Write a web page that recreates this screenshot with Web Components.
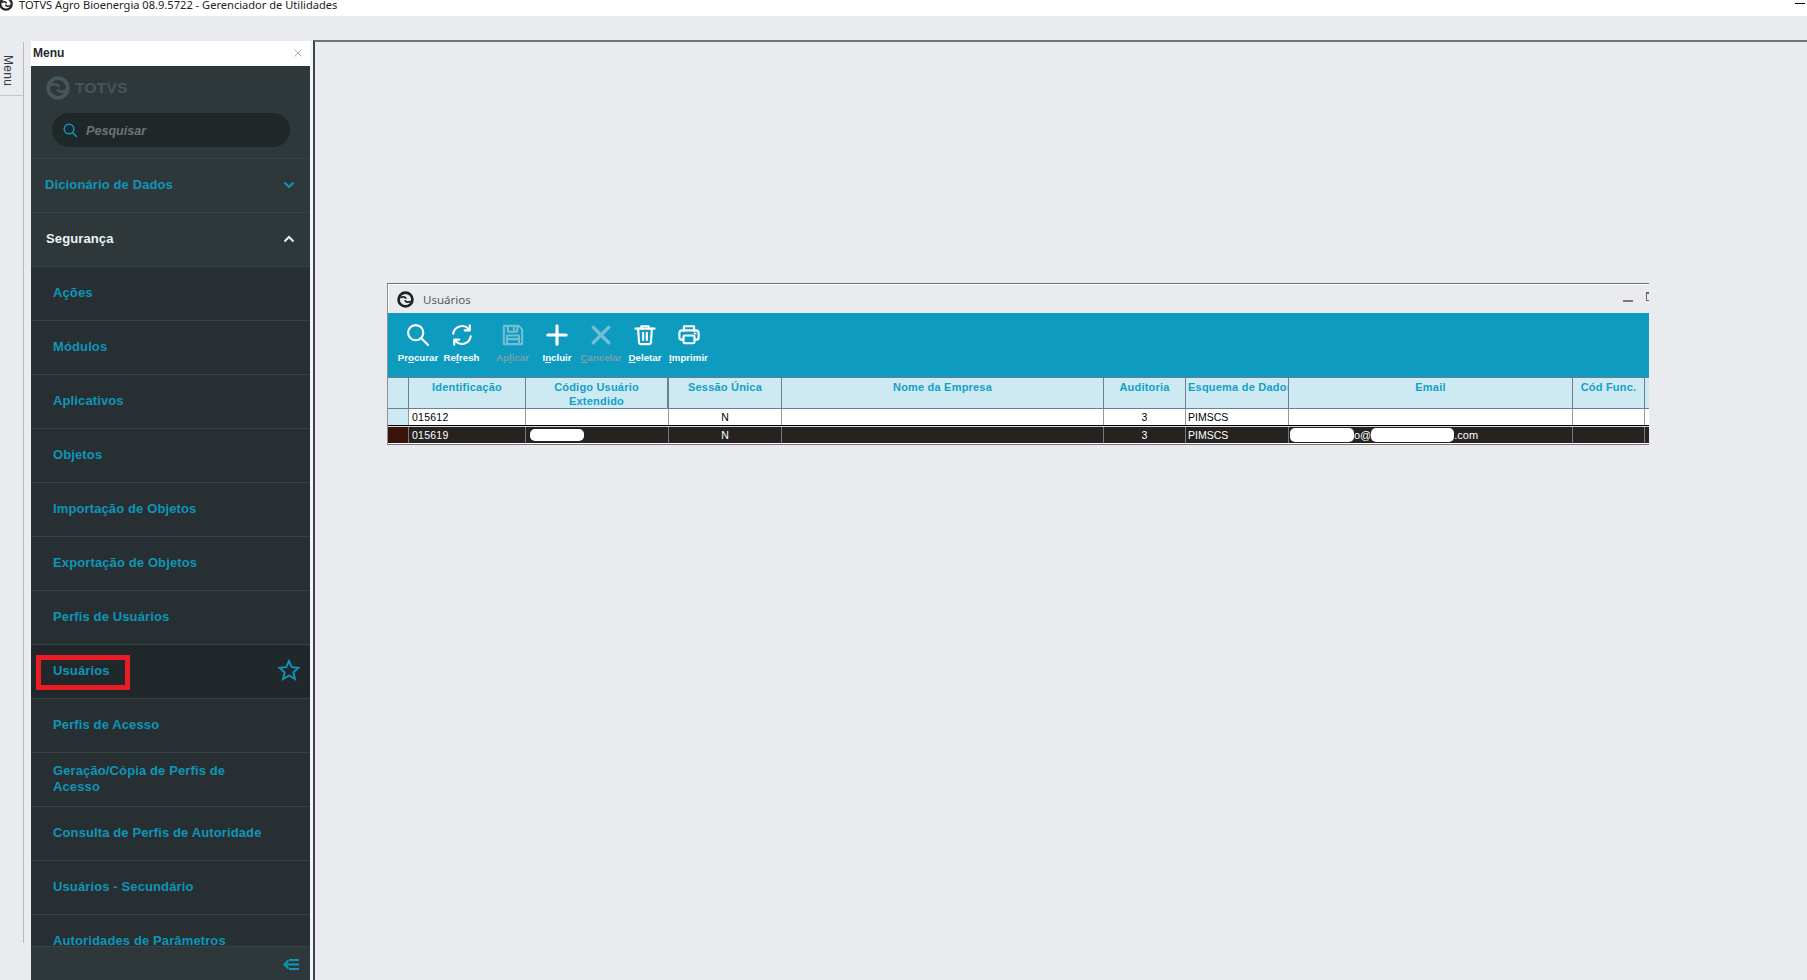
<!DOCTYPE html>
<html lang="pt"><head><meta charset="utf-8"><title>TOTVS</title>
<style>html,body{margin:0;height:100%;overflow:hidden;background:#e9ebef}</style></head>
<body>
<app-shell>
  <title-bar slot="top">TOTVS Agro Bioenergia 08.9.5722 - Gerenciador de Utilidades</title-bar>
  <side-rail slot="rail"></side-rail>
  <menu-panel slot="panel">
    <menu-item kind="group" chevron="down">Dicionário de Dados</menu-item>
    <menu-item kind="open" chevron="up">Segurança</menu-item>
    <menu-item>Ações</menu-item>
    <menu-item>Módulos</menu-item>
    <menu-item>Aplicativos</menu-item>
    <menu-item>Objetos</menu-item>
    <menu-item>Importação de Objetos</menu-item>
    <menu-item>Exportação de Objetos</menu-item>
    <menu-item>Perfis de Usuários</menu-item>
    <menu-item active>Usuários</menu-item>
    <menu-item>Perfis de Acesso</menu-item>
    <menu-item>Geração/Cópia de Perfis de Acesso</menu-item>
    <menu-item>Consulta de Perfis de Autoridade</menu-item>
    <menu-item>Usuários - Secundário</menu-item>
    <menu-item>Autoridades de Parâmetros</menu-item>
  </menu-panel>
  <desk-window slot="desk" caption="Usuários">
    <tool-button slot="tools" icon="search" style="width:40px;margin-left:10px"><span>Pr<u>o</u>curar</span></tool-button>
    <tool-button slot="tools" icon="refresh" style="width:35px;margin-left:6px"><span>Re<u>f</u>resh</span></tool-button>
    <tool-button slot="tools" icon="save" disabled style="width:31px;margin-left:18px"><span>Ap<u>l</u>icar</span></tool-button>
    <tool-button slot="tools" icon="plus" style="width:30px;margin-left:14px"><span>I<u>n</u>cluir</span></tool-button>
    <tool-button slot="tools" icon="close" disabled style="width:40px;margin-left:9px"><span><u>C</u>ancelar</span></tool-button>
    <tool-button slot="tools" icon="trash" style="width:32px;margin-left:8px"><span><u>D</u>eletar</span></tool-button>
    <tool-button slot="tools" icon="print" style="width:39px;margin-left:8px"><span><u>I</u>mprimir</span></tool-button>
    <data-grid></data-grid>
  </desk-window>
</app-shell>
<script>
const LOGO = (ring) => `<svg viewBox="0 0 24 24" width="100%" height="100%" aria-hidden="true"><circle cx="12" cy="12" r="9.800" fill="none" stroke="${ring}" stroke-width="3.800"/><path d="M4.500 9.500C8 7.500 11.500 8 13 10.800M19.500 14.500C16 16.500 12.500 16 11 13.200" fill="none" stroke="${ring}" stroke-width="2.600"/></svg>`;
const ICONS = {
  search:'<circle cx="9.500" cy="9.500" r="8.300"/><path d="M15.600 15.600l7.400 7.400"/>',
  refresh:'<path d="M2.500 10.500A9.700 9.700 0 0 1 19 5.200"/><path d="M20.500 1.500v5.500H15"/><path d="M21.500 13.500A9.700 9.700 0 0 1 5 18.800"/><path d="M3.500 22.500V17H9"/>',
  save:'<path d="M2 2h16l4 4v16H2z"/><path d="M6.500 2v6.500h10V2"/><path d="M13 4v2.500"/><path d="M5.500 22v-9.500h13V22"/><path d="M5.500 16.500h13"/>',
  plus:'<path d="M12 2v20M2 12h20" stroke-width="3.400"/>',
  close:'<path d="M3.500 3.500l17 17M20.500 3.500l-17 17" stroke-width="3.600"/>',
  trash:'<path d="M1.500 5h21"/><path d="M8 5V2.500h8V5"/><path d="M4.500 5l1 15a2.300 2.300 0 0 0 2.300 2h8.400a2.300 2.300 0 0 0 2.300-2l1-15"/><path d="M10 9.500v8M14 9.500v8"/>',
  print:'<path d="M6.500 7.500V2.500h11v5"/><path d="M6 17H3.500A2 2 0 0 1 1.500 15V10a3 3 0 0 1 3-3h15a3 3 0 0 1 3 3v5a2 2 0 0 1-2 2H18"/><rect x="6" y="12.500" width="12" height="8.500" rx="1.500"/><path d="M18.500 10.300h.5"/>'
};
function el(name, css, html){
  customElements.define(name, class extends HTMLElement{
    connectedCallback(){
      if(this.shadowRoot) return;
      const r=this.attachShadow({mode:'open'});
      r.innerHTML=`<style>${css}</style>`+(typeof html==='function'?html(this):html);
    }
  });
}
el('app-shell',`
  :host{display:flex;flex-direction:column;width:1807px;height:980px;overflow:hidden;font-family:"Liberation Sans",sans-serif;background:#e9ebef}
  .work{flex:1;display:flex;min-height:0}
  ::slotted([slot=desk]){flex:1;min-width:0}
`,`<slot name="top"></slot><div class="work"><slot name="rail"></slot><slot name="panel"></slot><slot name="desk"></slot></div>`);
el('title-bar',`
  :host{display:flex;height:16px;background:#fff;align-items:flex-start;position:relative;overflow:hidden;font:11.100px/10px "Noto Sans","Open Sans",sans-serif;color:#222}
  .ic{width:14px;height:14px;margin:-3px 6px 0 -1px;flex:none}
  .t{white-space:nowrap}
  .min{position:absolute;left:1795px;top:3px;width:10px;height:1px;background:#000}
`,()=>`<span class="ic">${LOGO('#1d2226')}</span><span class="t"><slot></slot></span><span class="min"></span>`);
el('side-rail',`
  :host{display:block;width:23px;height:901px;margin-top:26px;border-right:1px solid #b6b9be;flex:none}
  .m{box-sizing:border-box;height:54px;border-bottom:1px solid #c3c5c9;padding:13px 0 0 2px}
  .m span{display:block;writing-mode:vertical-rl;font:12px/12px "Liberation Sans",sans-serif;color:#2f3a4a;letter-spacing:.3px}
`,`<div class="m"><span>Menu</span></div>`);
el('menu-panel',`
  :host{display:flex;flex-direction:column;flex:none;width:279px;margin:25px 3px 0 7px;background:#272f32;color:#0e95b8;overflow:hidden;box-shadow:3px 0 0 #f3f5f7}
  .hd{height:25px;flex:none;background:#fff;display:flex;align-items:center;justify-content:space-between;padding:0 8px 2px 2px;box-sizing:border-box;font:bold 12px "Liberation Sans",sans-serif;color:#23282c}
  .hd svg{width:8px;height:8px}
  .top{height:93px;flex:none;box-sizing:border-box;background:#2e383a;border-bottom:1px solid #364244;padding:9px 0 0 15px}
  .logo{display:flex;align-items:center;height:26px;color:#46565a;font:bold 15.500px/26px "Liberation Sans",sans-serif;letter-spacing:.3px;gap:5px}
  .logo i{display:block;width:24px;height:24px}
  .search{box-sizing:border-box;width:238px;height:34px;margin:12px 0 0 6px;border-radius:17px;background:#1f2729;display:flex;align-items:center;padding:1px 0 0 11px;gap:8px;font:italic bold 12.600px "Liberation Sans",sans-serif;color:#6d7476}
  .search svg{width:15px;height:15px}
  .list{flex:1;min-height:0;overflow:hidden}
  .ft{height:34px;flex:none;background:#2e383a;border-top:1px solid #364244;box-sizing:border-box;display:flex;justify-content:flex-end;align-items:center;padding:2px 11px 0 0}
  .ft svg{width:16px;height:13px}
`,()=>`<div class="hd"><span>Menu</span><svg viewBox="0 0 8 8"><path d="M.5.5l7 7M7.500.5l-7 7" stroke="#aeb1b4" fill="none"/></svg></div>
<div class="top"><div class="logo"><i>${LOGO('#46565a')}</i><span>TOTVS</span></div>
<div class="search"><svg viewBox="0 0 15 15" fill="none" stroke="#0e95b8" stroke-width="1.500"><circle cx="6" cy="6" r="4.800"/><path d="M9.500 9.500L14 14"/></svg><span>Pesquisar</span></div></div>
<div class="list"><slot></slot></div>
<div class="ft"><svg viewBox="0 0 16 13" fill="none" stroke="#0e95b8" stroke-width="2"><path d="M6 2h10M1.500 6.500H16M6 11h10"/><path d="M5.500 2.500L1.500 6.500l4 4"/></svg></div>`);
el('menu-item',`
  :host{display:flex;align-items:center;position:relative;box-sizing:border-box;height:54px;border-bottom:1px solid #364244;padding:0 40px 2px 22px;font:bold 13px/16px "Liberation Sans",sans-serif;letter-spacing:.12px;color:#0e95b8;background:#272f32}
  :host([kind]){background:#2e383a;padding:0 10px 2px 14px}
  :host([kind=open]){color:#eef2f3;padding-left:15px}
  :host([active]){background:#21282b}
  .t{flex:1}
  svg.chev{width:12px;height:8px;margin-right:5px;flex:none}
  svg.star{position:absolute;left:247px;top:14px;width:22px;height:22px}
  .box{position:absolute;left:5px;top:10px;width:94px;height:35px;box-sizing:border-box;border:5px solid #ed1c24}
`,h=>{
  const k=h.getAttribute('chevron');
  const ch=k?`<svg class="chev" viewBox="0 0 12 8" fill="none" stroke="${k==='up'?'#eef2f3':'#0e95b8'}" stroke-width="2"><path d="${k==='up'?'M1.500 6.500L6 2l4.500 4.500':'M1.500 1.500L6 6l4.500-4.500'}"/></svg>`:'';
  const act=h.hasAttribute('active')?`<span class="box"></span><svg class="star" viewBox="0 0 22 22" fill="none" stroke="#0e95b8" stroke-width="1.900"><path d="M11 2l2.700 6.200 6.800.6-5.100 4.500 1.500 6.700L11 16.500 5.100 20l1.500-6.700L1.500 8.800l6.800-.6z"/></svg>`:'';
  return `<span class="t"><slot></slot></span>${ch}${act}`;
});
el('desk-window',`
  :host{display:block;position:relative;margin-top:24px;box-sizing:border-box;border-left:2px solid #3c4452;border-top:2px solid #6d7276;background:#e9ebef}
  .win{position:absolute;left:72px;top:241px;width:1262px;height:162px;box-sizing:border-box;border-top:1px solid #6b737b;border-left:1px solid #8b9096;overflow:hidden;display:flex;flex-direction:column}
  .cap{flex:none;height:29px;box-sizing:border-box;border-top:1px solid #fff;border-left:1px solid #fff;display:flex;align-items:center;padding-left:8px;gap:9px;position:relative;font:11.500px "Noto Sans","Open Sans",sans-serif;color:#545a62}
  .cap i{display:block;width:17px;height:17px}
  .min{position:absolute;left:1234px;top:15px;width:10px;height:2px;background:#777}
  .max{position:absolute;left:1257px;top:7px;width:8px;height:9px;box-sizing:border-box;border:1px solid #666;border-top-width:2px}
  .bar{flex:none;height:64px;background:#0d9bbf;display:flex;align-items:flex-start}
`,h=>`<div class="win"><div class="cap"><i>${LOGO('#1d2226')}</i><span>${h.getAttribute('caption')}</span><span class="min"></span><span class="max"></span></div><div class="bar"><slot name="tools"></slot></div><slot></slot></div>`);
el('tool-button',`
  :host{display:flex;flex-direction:column;align-items:center;flex:none;padding-top:11px;font:bold 9.700px/12px "Liberation Sans",sans-serif;color:#fff;white-space:nowrap}
  :host([disabled]){color:#7f9fab}
  svg{width:22px;height:22px;fill:none;stroke:#fff;stroke-width:2.300;stroke-linecap:round;stroke-linejoin:round;flex:none}
  :host([disabled]) svg{stroke:#72bed5}
  .l{margin-top:6px}
`,h=>`<svg viewBox="0 0 24 24">${ICONS[h.getAttribute('icon')]}</svg><div class="l"><slot></slot></div>`);
el('data-grid',`
  :host{display:block;font-family:"Liberation Sans",sans-serif;--c:21px 117px 143px 113px 322px 82px 103px 284px 72px 6px}
  .r{display:grid;grid-template-columns:var(--c);width:1263px}
  .r>div{box-sizing:border-box;border-right:1px solid var(--l);overflow:hidden;white-space:nowrap}
  .h{--l:#6b7f9a;height:32px;background:#cdeaf3;border-top:1px solid #6f7c86;border-bottom:1px solid #6b7f9a;box-sizing:border-box}
  .h>div{font:bold 11px/14px "Liberation Sans",sans-serif;color:#12a0c8;text-align:center;padding-top:2px;letter-spacing:.2px;white-space:normal}
  .h>.left{text-align:left;padding-left:2px;white-space:nowrap;letter-spacing:.22px}
  .h>.tk{border-right-width:2px}
  .d{font:10.500px/15px "Liberation Sans",sans-serif;text-align:center}
  .d>div{padding-top:1px}
  .d>.left{text-align:left;padding-left:2px}
  .d>.id{text-align:left;padding-left:3px;letter-spacing:.25px}
  .a{--l:#8e97a2;height:16px;background:#fff;color:#000}
  .a>.rh{background:#cdeaf3}
  .sep{height:2px;background:linear-gradient(#000 50%,#d8d8d8 50%)}
  .b{--l:#77797c;height:16px;background:#262220;color:#fff}
  .b>.rh{background:#3a140c}
  .end{height:2px;background:linear-gradient(#fff 50%,#777 50%)}
  .d>.em{display:flex;align-items:center;padding:0 0 0 1px;font-size:11px;line-height:14px}
  .blob{display:inline-block;background:#fff;border-radius:5px;height:14px;flex:none}
`,()=>`
<div class="r h"><div></div><div>Identificação</div><div class="tk">Código Usuário<br>Extendido</div><div>Sessão Única</div><div>Nome da Empresa</div><div>Auditoria</div><div class="left">Esquema de Dados</div><div>Email</div><div>Cód Func.</div><div></div></div>
<div class="r d a"><div class="rh"></div><div class="id">015612</div><div></div><div>N</div><div></div><div>3</div><div class="left">PIMSCS</div><div></div><div></div><div></div></div>
<div class="sep"></div>
<div class="r d b"><div class="rh"></div><div class="id">015619</div><div style="text-align:left;padding-left:4px"><span class="blob" style="width:54px;height:12px;vertical-align:top;margin-top:1px"></span></div><div>N</div><div></div><div>3</div><div class="left">PIMSCS</div><div class="em"><span class="blob" style="width:64px"></span><span>o@</span><span class="blob" style="width:83px"></span><span>.com</span></div><div></div><div></div></div>
<div class="end"></div>`);
</script>
</body></html>
